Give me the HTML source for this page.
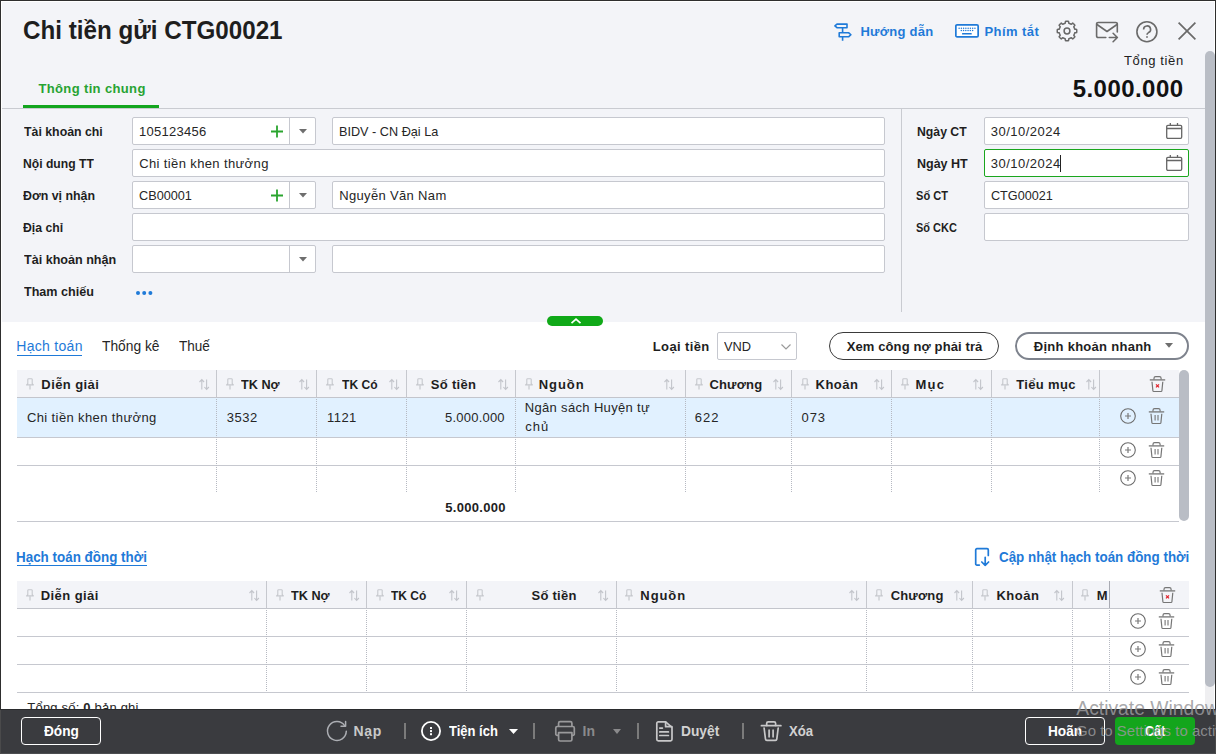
<!DOCTYPE html>
<html><head><meta charset="utf-8">
<style>
*{box-sizing:border-box}
html,body{margin:0;padding:0}
body{width:1216px;height:754px;overflow:hidden;position:relative;background:#f3f4f8;font-family:"Liberation Sans",sans-serif;color:#212121}
.a{position:absolute}
.t{position:absolute;white-space:nowrap}
.in{position:absolute;background:#fff;border:1px solid #c6c8cf;border-radius:2px}
.hl{position:absolute;height:1px;background:#c6c8cf}
.dv{position:absolute;width:1px;background-image:linear-gradient(transparent 50%,#b6b9c2 50%);background-size:1px 2px}
.hs{position:absolute;width:1px;background:#c6c8ce}
svg{position:absolute;overflow:visible}
</style></head><body>
<!-- frame -->
<div class=a style="left:0;top:0;width:1216px;height:1px;background:#2e2e2e"></div>
<div class=a style="left:0;top:0;width:1px;height:754px;background:#2e2e2e"></div>
<div class=a style="left:1215px;top:0;width:1px;height:754px;background:#2e2e2e"></div>
<div class=a style="left:1px;top:1px;width:1214px;height:1px;background:#fff"></div>
<div class=a style="left:1px;top:1px;width:1px;height:708px;background:#fff"></div>
<div class=a style="left:1214px;top:1px;width:1px;height:708px;background:#fff"></div>

<!-- header separator + tab underline -->
<div class=a style="left:2px;top:108px;width:1203px;height:1px;background:#c9cbd1"></div>
<div class=a style="left:23px;top:105px;width:136px;height:3px;background:#13a51f"></div>
<div class=a style="left:901px;top:109px;width:1px;height:203px;background:#c9cbd1"></div>

<!-- header icons -->
<!-- signpost -->
<svg style="left:834px;top:23px" width="18" height="18" viewBox="0 0 18 18" fill="none" stroke="#1f7ad8" stroke-width="1.6" stroke-linejoin="round">
<path d="M3 1.1h10v3.6H3L0.9 2.9z"/><path d="M8.6 4.7v5.1M8.6 13.7v4.1"/><path d="M5.2 9.8h9.6l2.1 1.95-2.1 1.95H5.2z"/></svg>
<!-- keyboard -->
<svg style="left:955px;top:24px" width="24" height="14" viewBox="0 0 24 14">
<rect x="0.85" y="0.85" width="22.3" height="12" rx="1.2" fill="#fff" stroke="#1f7ad8" stroke-width="1.7"/>
<g fill="#1f7ad8"><circle cx="4.10" cy="4.3" r="0.75"/><circle cx="6.36" cy="4.3" r="0.75"/><circle cx="8.62" cy="4.3" r="0.75"/><circle cx="10.88" cy="4.3" r="0.75"/><circle cx="13.14" cy="4.3" r="0.75"/><circle cx="15.40" cy="4.3" r="0.75"/><circle cx="17.66" cy="4.3" r="0.75"/><circle cx="19.92" cy="4.3" r="0.75"/><circle cx="6.30" cy="6.6" r="0.75"/><circle cx="8.56" cy="6.6" r="0.75"/><circle cx="10.82" cy="6.6" r="0.75"/><circle cx="13.08" cy="6.6" r="0.75"/><circle cx="15.34" cy="6.6" r="0.75"/><circle cx="17.60" cy="6.6" r="0.75"/><rect x="7" y="9" width="9.8" height="1.6" rx=".6"/></g></svg>
<!-- gear -->
<svg style="left:1056px;top:20px" width="22" height="22" viewBox="0 0 22 22" fill="none" stroke="#676767" stroke-width="1.5" stroke-linejoin="round">
<path d="M20.75 11.00 L20.75 11.26 L20.74 11.51 L20.72 11.76 L20.70 12.02 L20.67 12.27 L20.62 12.52 L19.87 12.64 L19.10 12.72 L18.68 12.84 L18.63 13.04 L18.57 13.24 L18.51 13.44 L18.45 13.64 L18.38 13.83 L18.30 14.02 L18.22 14.21 L18.13 14.40 L18.04 14.59 L17.94 14.77 L17.84 14.95 L17.74 15.13 L17.95 15.51 L18.43 16.11 L18.88 16.72 L18.74 16.94 L18.58 17.14 L18.41 17.33 L18.25 17.52 L18.07 17.71 L17.89 17.89 L17.71 18.07 L17.52 18.25 L17.33 18.41 L17.14 18.58 L16.94 18.74 L16.72 18.88 L16.11 18.43 L15.51 17.95 L15.13 17.74 L14.95 17.84 L14.77 17.94 L14.59 18.04 L14.40 18.13 L14.21 18.22 L14.02 18.30 L13.83 18.38 L13.64 18.45 L13.44 18.51 L13.24 18.57 L13.04 18.63 L12.84 18.68 L12.72 19.10 L12.64 19.87 L12.52 20.62 L12.27 20.67 L12.02 20.70 L11.76 20.72 L11.51 20.74 L11.26 20.75 L11.00 20.75 L10.74 20.75 L10.49 20.74 L10.24 20.72 L9.98 20.70 L9.73 20.67 L9.48 20.62 L9.36 19.87 L9.28 19.10 L9.16 18.68 L8.96 18.63 L8.76 18.57 L8.56 18.51 L8.36 18.45 L8.17 18.38 L7.98 18.30 L7.79 18.22 L7.60 18.13 L7.41 18.04 L7.23 17.94 L7.05 17.84 L6.87 17.74 L6.49 17.95 L5.89 18.43 L5.28 18.88 L5.06 18.74 L4.86 18.58 L4.67 18.41 L4.48 18.25 L4.29 18.07 L4.11 17.89 L3.93 17.71 L3.75 17.52 L3.59 17.33 L3.42 17.14 L3.26 16.94 L3.12 16.72 L3.57 16.11 L4.05 15.51 L4.26 15.13 L4.16 14.95 L4.06 14.77 L3.96 14.59 L3.87 14.40 L3.78 14.21 L3.70 14.02 L3.62 13.83 L3.55 13.64 L3.49 13.44 L3.43 13.24 L3.37 13.04 L3.32 12.84 L2.90 12.72 L2.13 12.64 L1.38 12.52 L1.33 12.27 L1.30 12.02 L1.28 11.76 L1.26 11.51 L1.25 11.26 L1.25 11.00 L1.25 10.74 L1.26 10.49 L1.28 10.24 L1.30 9.98 L1.33 9.73 L1.38 9.48 L2.13 9.36 L2.90 9.28 L3.32 9.16 L3.37 8.96 L3.43 8.76 L3.49 8.56 L3.55 8.36 L3.62 8.17 L3.70 7.98 L3.78 7.79 L3.87 7.60 L3.96 7.41 L4.06 7.23 L4.16 7.05 L4.26 6.87 L4.05 6.49 L3.57 5.89 L3.12 5.28 L3.26 5.06 L3.42 4.86 L3.59 4.67 L3.75 4.48 L3.93 4.29 L4.11 4.11 L4.29 3.93 L4.48 3.75 L4.67 3.59 L4.86 3.42 L5.06 3.26 L5.28 3.12 L5.89 3.57 L6.49 4.05 L6.87 4.26 L7.05 4.16 L7.23 4.06 L7.41 3.96 L7.60 3.87 L7.79 3.78 L7.98 3.70 L8.17 3.62 L8.36 3.55 L8.56 3.49 L8.76 3.43 L8.96 3.37 L9.16 3.32 L9.28 2.90 L9.36 2.13 L9.48 1.38 L9.73 1.33 L9.98 1.30 L10.24 1.28 L10.49 1.26 L10.74 1.25 L11.00 1.25 L11.26 1.25 L11.51 1.26 L11.76 1.28 L12.02 1.30 L12.27 1.33 L12.52 1.38 L12.64 2.13 L12.72 2.90 L12.84 3.32 L13.04 3.37 L13.24 3.43 L13.44 3.49 L13.64 3.55 L13.83 3.62 L14.02 3.70 L14.21 3.78 L14.40 3.87 L14.59 3.96 L14.77 4.06 L14.95 4.16 L15.13 4.26 L15.51 4.05 L16.11 3.57 L16.72 3.12 L16.94 3.26 L17.14 3.42 L17.33 3.59 L17.52 3.75 L17.71 3.93 L17.89 4.11 L18.07 4.29 L18.25 4.48 L18.41 4.67 L18.58 4.86 L18.74 5.06 L18.88 5.28 L18.43 5.89 L17.95 6.49 L17.74 6.87 L17.84 7.05 L17.94 7.23 L18.04 7.41 L18.13 7.60 L18.22 7.79 L18.30 7.98 L18.38 8.17 L18.45 8.36 L18.51 8.56 L18.57 8.76 L18.63 8.96 L18.68 9.16 L19.10 9.28 L19.87 9.36 L20.62 9.48 L20.67 9.73 L20.70 9.98 L20.72 10.24 L20.74 10.49 L20.75 10.74Z"/><circle cx="11" cy="11" r="2.9"/></svg>
<!-- mail -->
<svg style="left:1096px;top:22px" width="23" height="21" viewBox="0 0 23 21" fill="none" stroke="#6a6a6a" stroke-width="1.6" stroke-linejoin="round" stroke-linecap="round"><path d="M9.8 15.5H2.1A1.5 1.5 0 0 1 0.6 14V2A1.5 1.5 0 0 1 2.1 0.5h17.7A1.5 1.5 0 0 1 21.3 2v7.9"/><path d="M1 2.5l10 7 10-7"/><path d="M13.3 15.5h8.1M17.1 11.3l4.3 4.2-4.3 4.2"/></svg>
<!-- help -->
<svg style="left:1136px;top:21px" width="22" height="22" viewBox="0 0 22 22" fill="none" stroke="#6a6a6a" stroke-width="1.6">
<circle cx="10.9" cy="10.7" r="10"/><path d="M7.6 8.4A3.5 3.5 0 1 1 12.5 11.6C11.5 12.1 11 12.7 11 13.8"/><rect x="10.2" y="15.2" width="1.6" height="1.6" fill="#6a6a6a" stroke="none"/></svg>
<!-- close -->
<svg style="left:1178px;top:22px" width="18" height="18" viewBox="0 0 18 18" stroke="#6a6a6a" stroke-width="1.7"><path d="M0.6 0.6l16.8 16.8M17.4 0.6L0.6 17.4"/></svg>

<!-- page scrollbar -->
<div class=a style="left:1205px;top:660px;width:9px;height:49px;background:#efeff1"></div>
<div class=a style="z-index:3;left:1205px;top:51px;width:10px;height:635.5px;background:#b9bdc5;border-radius:5px"></div>

<!-- ======= form inputs ======= -->
<div class=in style="left:132px;top:117px;width:184px;height:28px"></div>
<div class=a style="left:289px;top:118px;width:1px;height:26px;background:#c6c8cf"></div>
<div class=in style="left:332px;top:117px;width:553px;height:28px"></div>
<div class=in style="left:132px;top:149px;width:753px;height:28px"></div>
<div class=in style="left:132px;top:181px;width:184px;height:28px"></div>
<div class=a style="left:289px;top:182px;width:1px;height:26px;background:#c6c8cf"></div>
<div class=in style="left:332px;top:181px;width:553px;height:28px"></div>
<div class=in style="left:132px;top:213px;width:753px;height:28px"></div>
<div class=in style="left:132px;top:245px;width:184px;height:28px"></div>
<div class=a style="left:289px;top:246px;width:1px;height:26px;background:#c6c8cf"></div>
<div class=in style="left:332px;top:245px;width:553px;height:28px"></div>
<!-- plus + triangles -->
<svg style="left:271px;top:125px" width="12" height="13" viewBox="0 0 12 13" stroke="#2aa52f" stroke-width="1.8"><path d="M6 0.5v12M0 6.5h12"/></svg>
<svg style="left:271px;top:189px" width="12" height="13" viewBox="0 0 12 13" stroke="#2aa52f" stroke-width="1.8"><path d="M6 0.5v12M0 6.5h12"/></svg>
<svg style="left:299px;top:129px" width="8" height="5" viewBox="0 0 8 5"><path d="M0 0h8L4 4.6z" fill="#6e6e6e"/></svg>
<svg style="left:299px;top:193px" width="8" height="5" viewBox="0 0 8 5"><path d="M0 0h8L4 4.6z" fill="#6e6e6e"/></svg>
<svg style="left:299px;top:257px" width="8" height="5" viewBox="0 0 8 5"><path d="M0 0h8L4 4.6z" fill="#6e6e6e"/></svg>
<!-- dots -->
<svg style="left:136px;top:290px" width="17" height="6" viewBox="0 0 17 6" fill="#1f7ad8"><circle cx="2" cy="3" r="2"/><circle cx="8.2" cy="3" r="2"/><circle cx="14.4" cy="3" r="2"/></svg>

<!-- right column inputs -->
<div class=in style="left:984px;top:117px;width:205px;height:28px"></div>
<div class=in style="left:984px;top:149px;width:205px;height:28px;border:1.5px solid #1aa61e"></div>
<div class=in style="left:984px;top:181px;width:205px;height:28px"></div>
<div class=in style="left:984px;top:213px;width:205px;height:28px"></div>
<svg style="left:1166px;top:123px" width="16" height="16" viewBox="0 0 16 16" fill="none" stroke="#666" stroke-width="1.3"><rect x="0.7" y="2.3" width="15" height="13" rx="1.2"/><path d="M0.7 5.5h15M4.3 0v2.3M11.5 0v2.3"/></svg>
<svg style="left:1166px;top:155px" width="16" height="16" viewBox="0 0 16 16" fill="none" stroke="#666" stroke-width="1.3"><rect x="0.7" y="2.3" width="15" height="13" rx="1.2"/><path d="M0.7 5.5h15M4.3 0v2.3M11.5 0v2.3"/></svg>
<div class=a style="left:1060px;top:155px;width:1px;height:17px;background:#222"></div>

<!-- ======= lower white area ======= -->
<div class=a style="left:2px;top:322px;width:1203px;height:387px;background:#fff"></div>
<!-- collapse pill -->
<div class=a style="left:547px;top:316px;width:56px;height:10px;background:#10a918;border-radius:5px"></div>
<svg style="left:571px;top:318px" width="10" height="6" viewBox="0 0 10 6" fill="none" stroke="#fff" stroke-width="1.7"><path d="M0.5 5.2l4.5-4 4.5 4"/></svg>

<!-- tabs underline -->
<div class=a style="left:17px;top:355px;width:65px;height:1.2px;background:#1f7ad8"></div>
<!-- select VND -->
<div class=in style="left:717px;top:332px;width:80px;height:28px;border-color:#c6c8cf"></div>
<svg style="left:781px;top:344px" width="10" height="6" viewBox="0 0 10 6" fill="none" stroke="#9a9a9a" stroke-width="1.2"><path d="M0.5 0.5l4.5 4.5 4.5-4.5"/></svg>
<!-- buttons -->
<div class=a style="left:829px;top:332px;width:170px;height:28px;border:1px solid #3a3a3a;border-radius:14px;background:#fff"></div>
<div class=a style="left:1015px;top:332px;width:174px;height:28px;border:2px solid #7e838d;border-radius:14px;background:#fff"></div>
<svg style="left:1165px;top:343px" width="8" height="5" viewBox="0 0 8 5"><path d="M0 0h8L4 4.8z" fill="#6e6e6e"/></svg>

<!-- ======= table 1 ======= -->
<div class=a style="left:17px;top:370px;width:1162px;height:27px;background:#f3f4f8"></div>
<div class=hl style="left:17px;top:397px;width:1162px;background:#c3c5cc"></div>
<div class=a style="left:17px;top:398px;width:1162px;height:39px;background:#e1f1ff"></div>
<div class=hl style="left:17px;top:437px;width:1162px"></div>
<div class=hl style="left:17px;top:465px;width:1162px"></div>
<div class=hl style="left:17px;top:521px;width:1162px"></div>
<div class=a style="left:1179px;top:370px;width:10px;height:151px;background:#b9bdc5;border-radius:5px"></div>
<!-- header separators -->
<div class=hs style="left:216px;top:370px;height:27px"></div>
<div class=hs style="left:316px;top:370px;height:27px"></div>
<div class=hs style="left:406px;top:370px;height:27px"></div>
<div class=hs style="left:515px;top:370px;height:27px"></div>
<div class=hs style="left:685px;top:370px;height:27px"></div>
<div class=hs style="left:791px;top:370px;height:27px"></div>
<div class=hs style="left:891px;top:370px;height:27px"></div>
<div class=hs style="left:991px;top:370px;height:27px"></div>
<div class=hs style="left:1099px;top:370px;height:27px"></div>
<!-- dotted -->
<div class=dv style="left:216px;top:398px;height:95px"></div>
<div class=dv style="left:316px;top:398px;height:95px"></div>
<div class=dv style="left:406px;top:398px;height:95px"></div>
<div class=dv style="left:515px;top:398px;height:95px"></div>
<div class=dv style="left:685px;top:398px;height:95px"></div>
<div class=dv style="left:791px;top:398px;height:95px"></div>
<div class=dv style="left:891px;top:398px;height:95px"></div>
<div class=dv style="left:991px;top:398px;height:95px"></div>
<div class=dv style="left:1099px;top:398px;height:95px"></div>
<svg style="left:25.5px;top:378px" width="8" height="12" viewBox="0 0 8 12" fill="none" stroke="#c6c8cd" stroke-width="1.1" stroke-linejoin="round"><path d="M2.6 0.7h2.8a.8.8 0 0 1 .8.8v4.2l1.2 1.2H0.6l1.2-1.2V1.5a.8.8 0 0 1 .8-.8z"/><path d="M4 7.2v4.3" stroke-width="1.2"/></svg>
<svg style="left:199px;top:379px" width="11" height="11" viewBox="0 0 11 11" fill="none" stroke="#c3c5cb" stroke-width="1.1"><path d="M2.8 0.6v10M0.5 3l2.3-2.4L5.1 3"/><path d="M7.6 0.4v10M5.4 8l2.2 2.4L9.9 8"/></svg>
<svg style="left:225.5px;top:378px" width="8" height="12" viewBox="0 0 8 12" fill="none" stroke="#c6c8cd" stroke-width="1.1" stroke-linejoin="round"><path d="M2.6 0.7h2.8a.8.8 0 0 1 .8.8v4.2l1.2 1.2H0.6l1.2-1.2V1.5a.8.8 0 0 1 .8-.8z"/><path d="M4 7.2v4.3" stroke-width="1.2"/></svg>
<svg style="left:299px;top:379px" width="11" height="11" viewBox="0 0 11 11" fill="none" stroke="#c3c5cb" stroke-width="1.1"><path d="M2.8 0.6v10M0.5 3l2.3-2.4L5.1 3"/><path d="M7.6 0.4v10M5.4 8l2.2 2.4L9.9 8"/></svg>
<svg style="left:325.5px;top:378px" width="8" height="12" viewBox="0 0 8 12" fill="none" stroke="#c6c8cd" stroke-width="1.1" stroke-linejoin="round"><path d="M2.6 0.7h2.8a.8.8 0 0 1 .8.8v4.2l1.2 1.2H0.6l1.2-1.2V1.5a.8.8 0 0 1 .8-.8z"/><path d="M4 7.2v4.3" stroke-width="1.2"/></svg>
<svg style="left:389px;top:379px" width="11" height="11" viewBox="0 0 11 11" fill="none" stroke="#c3c5cb" stroke-width="1.1"><path d="M2.8 0.6v10M0.5 3l2.3-2.4L5.1 3"/><path d="M7.6 0.4v10M5.4 8l2.2 2.4L9.9 8"/></svg>
<svg style="left:415.5px;top:378px" width="8" height="12" viewBox="0 0 8 12" fill="none" stroke="#c6c8cd" stroke-width="1.1" stroke-linejoin="round"><path d="M2.6 0.7h2.8a.8.8 0 0 1 .8.8v4.2l1.2 1.2H0.6l1.2-1.2V1.5a.8.8 0 0 1 .8-.8z"/><path d="M4 7.2v4.3" stroke-width="1.2"/></svg>
<svg style="left:498px;top:379px" width="11" height="11" viewBox="0 0 11 11" fill="none" stroke="#c3c5cb" stroke-width="1.1"><path d="M2.8 0.6v10M0.5 3l2.3-2.4L5.1 3"/><path d="M7.6 0.4v10M5.4 8l2.2 2.4L9.9 8"/></svg>
<svg style="left:524.5px;top:378px" width="8" height="12" viewBox="0 0 8 12" fill="none" stroke="#c6c8cd" stroke-width="1.1" stroke-linejoin="round"><path d="M2.6 0.7h2.8a.8.8 0 0 1 .8.8v4.2l1.2 1.2H0.6l1.2-1.2V1.5a.8.8 0 0 1 .8-.8z"/><path d="M4 7.2v4.3" stroke-width="1.2"/></svg>
<svg style="left:664px;top:379px" width="11" height="11" viewBox="0 0 11 11" fill="none" stroke="#c3c5cb" stroke-width="1.1"><path d="M2.8 0.6v10M0.5 3l2.3-2.4L5.1 3"/><path d="M7.6 0.4v10M5.4 8l2.2 2.4L9.9 8"/></svg>
<svg style="left:694.5px;top:378px" width="8" height="12" viewBox="0 0 8 12" fill="none" stroke="#c6c8cd" stroke-width="1.1" stroke-linejoin="round"><path d="M2.6 0.7h2.8a.8.8 0 0 1 .8.8v4.2l1.2 1.2H0.6l1.2-1.2V1.5a.8.8 0 0 1 .8-.8z"/><path d="M4 7.2v4.3" stroke-width="1.2"/></svg>
<svg style="left:773px;top:379px" width="11" height="11" viewBox="0 0 11 11" fill="none" stroke="#c3c5cb" stroke-width="1.1"><path d="M2.8 0.6v10M0.5 3l2.3-2.4L5.1 3"/><path d="M7.6 0.4v10M5.4 8l2.2 2.4L9.9 8"/></svg>
<svg style="left:800.5px;top:378px" width="8" height="12" viewBox="0 0 8 12" fill="none" stroke="#c6c8cd" stroke-width="1.1" stroke-linejoin="round"><path d="M2.6 0.7h2.8a.8.8 0 0 1 .8.8v4.2l1.2 1.2H0.6l1.2-1.2V1.5a.8.8 0 0 1 .8-.8z"/><path d="M4 7.2v4.3" stroke-width="1.2"/></svg>
<svg style="left:874px;top:379px" width="11" height="11" viewBox="0 0 11 11" fill="none" stroke="#c3c5cb" stroke-width="1.1"><path d="M2.8 0.6v10M0.5 3l2.3-2.4L5.1 3"/><path d="M7.6 0.4v10M5.4 8l2.2 2.4L9.9 8"/></svg>
<svg style="left:900.5px;top:378px" width="8" height="12" viewBox="0 0 8 12" fill="none" stroke="#c6c8cd" stroke-width="1.1" stroke-linejoin="round"><path d="M2.6 0.7h2.8a.8.8 0 0 1 .8.8v4.2l1.2 1.2H0.6l1.2-1.2V1.5a.8.8 0 0 1 .8-.8z"/><path d="M4 7.2v4.3" stroke-width="1.2"/></svg>
<svg style="left:973px;top:379px" width="11" height="11" viewBox="0 0 11 11" fill="none" stroke="#c3c5cb" stroke-width="1.1"><path d="M2.8 0.6v10M0.5 3l2.3-2.4L5.1 3"/><path d="M7.6 0.4v10M5.4 8l2.2 2.4L9.9 8"/></svg>
<svg style="left:1000.5px;top:378px" width="8" height="12" viewBox="0 0 8 12" fill="none" stroke="#c6c8cd" stroke-width="1.1" stroke-linejoin="round"><path d="M2.6 0.7h2.8a.8.8 0 0 1 .8.8v4.2l1.2 1.2H0.6l1.2-1.2V1.5a.8.8 0 0 1 .8-.8z"/><path d="M4 7.2v4.3" stroke-width="1.2"/></svg>
<svg style="left:1086px;top:379px" width="11" height="11" viewBox="0 0 11 11" fill="none" stroke="#c3c5cb" stroke-width="1.1"><path d="M2.8 0.6v10M0.5 3l2.3-2.4L5.1 3"/><path d="M7.6 0.4v10M5.4 8l2.2 2.4L9.9 8"/></svg>
<svg style="left:1149.5px;top:376px" width="15" height="16" viewBox="0 0 15 16" fill="none" stroke="#767676" stroke-width="1.2" stroke-linejoin="round"><path d="M-0.2 3.9h15.4" stroke-width="1.3"/><path d="M4 3.6V2.3a1.6 1.6 0 0 1 1.6-1.6h3.9a1.6 1.6 0 0 1 1.6 1.6v1.3"/><path d="M2 5.8l.9 8.9a.9.9 0 0 0 .9.8h7.2a.9.9 0 0 0 .9-.8l.9-8.9"/><path d="M6 8.4l3 3M9 8.4l-3 3" stroke="#e0242c" stroke-width="1.3"/></svg>
<svg style="left:1120px;top:408px" width="16" height="16" viewBox="0 0 16 16" fill="none" stroke="#6b6b6b" stroke-width="1.1"><circle cx="8" cy="8" r="7.3"/><path d="M8 5v6M5 8h6" stroke-width="1.2" stroke="#7a7a7a"/></svg>
<svg style="left:1148.5px;top:408px" width="15" height="16" viewBox="0 0 15 16" fill="none" stroke="#767676" stroke-width="1.2" stroke-linejoin="round"><path d="M-0.2 3.9h15.4" stroke-width="1.3"/><path d="M4 3.6V2.3a1.6 1.6 0 0 1 1.6-1.6h3.9a1.6 1.6 0 0 1 1.6 1.6v1.3"/><path d="M2 5.8l.9 8.9a.9.9 0 0 0 .9.8h7.2a.9.9 0 0 0 .9-.8l.9-8.9"/><path d="M6.1 7v5.4M9 7v5.4" stroke-width="1.1"/></svg>
<svg style="left:1120px;top:442px" width="16" height="16" viewBox="0 0 16 16" fill="none" stroke="#6b6b6b" stroke-width="1.1"><circle cx="8" cy="8" r="7.3"/><path d="M8 5v6M5 8h6" stroke-width="1.2" stroke="#7a7a7a"/></svg>
<svg style="left:1148.5px;top:442px" width="15" height="16" viewBox="0 0 15 16" fill="none" stroke="#767676" stroke-width="1.2" stroke-linejoin="round"><path d="M-0.2 3.9h15.4" stroke-width="1.3"/><path d="M4 3.6V2.3a1.6 1.6 0 0 1 1.6-1.6h3.9a1.6 1.6 0 0 1 1.6 1.6v1.3"/><path d="M2 5.8l.9 8.9a.9.9 0 0 0 .9.8h7.2a.9.9 0 0 0 .9-.8l.9-8.9"/><path d="M6.1 7v5.4M9 7v5.4" stroke-width="1.1"/></svg>
<svg style="left:1120px;top:470px" width="16" height="16" viewBox="0 0 16 16" fill="none" stroke="#6b6b6b" stroke-width="1.1"><circle cx="8" cy="8" r="7.3"/><path d="M8 5v6M5 8h6" stroke-width="1.2" stroke="#7a7a7a"/></svg>
<svg style="left:1148.5px;top:470px" width="15" height="16" viewBox="0 0 15 16" fill="none" stroke="#767676" stroke-width="1.2" stroke-linejoin="round"><path d="M-0.2 3.9h15.4" stroke-width="1.3"/><path d="M4 3.6V2.3a1.6 1.6 0 0 1 1.6-1.6h3.9a1.6 1.6 0 0 1 1.6 1.6v1.3"/><path d="M2 5.8l.9 8.9a.9.9 0 0 0 .9.8h7.2a.9.9 0 0 0 .9-.8l.9-8.9"/><path d="M6.1 7v5.4M9 7v5.4" stroke-width="1.1"/></svg>

<!-- ======= table 2 ======= -->
<div class=a style="left:17px;top:565.2px;width:130px;height:1.2px;background:#1f7ad8"></div>
<svg style="left:975px;top:548px" width="16" height="19" viewBox="0 0 16 19" fill="none" stroke="#1f7ad8" stroke-width="1.7" stroke-linejoin="round" stroke-linecap="round"><path d="M4.3 17.1H1.9a1.2 1.2 0 0 1-1.2-1.2V1.9A1.2 1.2 0 0 1 1.9 0.7h10.2a1.2 1.2 0 0 1 1.2 1.2v5.6"/><path d="M10.2 9.3v8M6.8 14l3.4 3.4 3.4-3.4"/></svg>
<div class=a style="left:17px;top:581px;width:1172px;height:27px;background:#f3f4f8"></div>
<div class=hl style="left:17px;top:608px;width:1172px;background:#c3c5cc"></div>
<div class=hl style="left:17px;top:636px;width:1172px"></div>
<div class=hl style="left:17px;top:664px;width:1172px"></div>
<div class=hl style="left:17px;top:692px;width:1172px"></div>
<div class=hs style="left:266px;top:581px;height:27px"></div>
<div class=hs style="left:366px;top:581px;height:27px"></div>
<div class=hs style="left:466px;top:581px;height:27px"></div>
<div class=hs style="left:616px;top:581px;height:27px"></div>
<div class=hs style="left:866px;top:581px;height:27px"></div>
<div class=hs style="left:972px;top:581px;height:27px"></div>
<div class=hs style="left:1072px;top:581px;height:27px"></div>
<div class=hs style="left:1109px;top:581px;height:27px;background:#a9abb3"></div>
<div class=dv style="left:266px;top:609px;height:83px"></div>
<div class=dv style="left:366px;top:609px;height:83px"></div>
<div class=dv style="left:466px;top:609px;height:83px"></div>
<div class=dv style="left:616px;top:609px;height:83px"></div>
<div class=dv style="left:866px;top:609px;height:83px"></div>
<div class=dv style="left:972px;top:609px;height:83px"></div>
<div class=dv style="left:1072px;top:609px;height:83px"></div>
<div class=dv style="left:1109px;top:609px;height:83px"></div>
<svg style="left:25.5px;top:589px" width="8" height="12" viewBox="0 0 8 12" fill="none" stroke="#c6c8cd" stroke-width="1.1" stroke-linejoin="round"><path d="M2.6 0.7h2.8a.8.8 0 0 1 .8.8v4.2l1.2 1.2H0.6l1.2-1.2V1.5a.8.8 0 0 1 .8-.8z"/><path d="M4 7.2v4.3" stroke-width="1.2"/></svg>
<svg style="left:249px;top:590px" width="11" height="11" viewBox="0 0 11 11" fill="none" stroke="#c3c5cb" stroke-width="1.1"><path d="M2.8 0.6v10M0.5 3l2.3-2.4L5.1 3"/><path d="M7.6 0.4v10M5.4 8l2.2 2.4L9.9 8"/></svg>
<svg style="left:275.5px;top:589px" width="8" height="12" viewBox="0 0 8 12" fill="none" stroke="#c6c8cd" stroke-width="1.1" stroke-linejoin="round"><path d="M2.6 0.7h2.8a.8.8 0 0 1 .8.8v4.2l1.2 1.2H0.6l1.2-1.2V1.5a.8.8 0 0 1 .8-.8z"/><path d="M4 7.2v4.3" stroke-width="1.2"/></svg>
<svg style="left:349px;top:590px" width="11" height="11" viewBox="0 0 11 11" fill="none" stroke="#c3c5cb" stroke-width="1.1"><path d="M2.8 0.6v10M0.5 3l2.3-2.4L5.1 3"/><path d="M7.6 0.4v10M5.4 8l2.2 2.4L9.9 8"/></svg>
<svg style="left:375.5px;top:589px" width="8" height="12" viewBox="0 0 8 12" fill="none" stroke="#c6c8cd" stroke-width="1.1" stroke-linejoin="round"><path d="M2.6 0.7h2.8a.8.8 0 0 1 .8.8v4.2l1.2 1.2H0.6l1.2-1.2V1.5a.8.8 0 0 1 .8-.8z"/><path d="M4 7.2v4.3" stroke-width="1.2"/></svg>
<svg style="left:449px;top:590px" width="11" height="11" viewBox="0 0 11 11" fill="none" stroke="#c3c5cb" stroke-width="1.1"><path d="M2.8 0.6v10M0.5 3l2.3-2.4L5.1 3"/><path d="M7.6 0.4v10M5.4 8l2.2 2.4L9.9 8"/></svg>
<svg style="left:475.5px;top:589px" width="8" height="12" viewBox="0 0 8 12" fill="none" stroke="#c6c8cd" stroke-width="1.1" stroke-linejoin="round"><path d="M2.6 0.7h2.8a.8.8 0 0 1 .8.8v4.2l1.2 1.2H0.6l1.2-1.2V1.5a.8.8 0 0 1 .8-.8z"/><path d="M4 7.2v4.3" stroke-width="1.2"/></svg>
<svg style="left:598px;top:590px" width="11" height="11" viewBox="0 0 11 11" fill="none" stroke="#c3c5cb" stroke-width="1.1"><path d="M2.8 0.6v10M0.5 3l2.3-2.4L5.1 3"/><path d="M7.6 0.4v10M5.4 8l2.2 2.4L9.9 8"/></svg>
<svg style="left:624.5px;top:589px" width="8" height="12" viewBox="0 0 8 12" fill="none" stroke="#c6c8cd" stroke-width="1.1" stroke-linejoin="round"><path d="M2.6 0.7h2.8a.8.8 0 0 1 .8.8v4.2l1.2 1.2H0.6l1.2-1.2V1.5a.8.8 0 0 1 .8-.8z"/><path d="M4 7.2v4.3" stroke-width="1.2"/></svg>
<svg style="left:849px;top:590px" width="11" height="11" viewBox="0 0 11 11" fill="none" stroke="#c3c5cb" stroke-width="1.1"><path d="M2.8 0.6v10M0.5 3l2.3-2.4L5.1 3"/><path d="M7.6 0.4v10M5.4 8l2.2 2.4L9.9 8"/></svg>
<svg style="left:874.5px;top:589px" width="8" height="12" viewBox="0 0 8 12" fill="none" stroke="#c6c8cd" stroke-width="1.1" stroke-linejoin="round"><path d="M2.6 0.7h2.8a.8.8 0 0 1 .8.8v4.2l1.2 1.2H0.6l1.2-1.2V1.5a.8.8 0 0 1 .8-.8z"/><path d="M4 7.2v4.3" stroke-width="1.2"/></svg>
<svg style="left:954px;top:590px" width="11" height="11" viewBox="0 0 11 11" fill="none" stroke="#c3c5cb" stroke-width="1.1"><path d="M2.8 0.6v10M0.5 3l2.3-2.4L5.1 3"/><path d="M7.6 0.4v10M5.4 8l2.2 2.4L9.9 8"/></svg>
<svg style="left:980.5px;top:589px" width="8" height="12" viewBox="0 0 8 12" fill="none" stroke="#c6c8cd" stroke-width="1.1" stroke-linejoin="round"><path d="M2.6 0.7h2.8a.8.8 0 0 1 .8.8v4.2l1.2 1.2H0.6l1.2-1.2V1.5a.8.8 0 0 1 .8-.8z"/><path d="M4 7.2v4.3" stroke-width="1.2"/></svg>
<svg style="left:1054px;top:590px" width="11" height="11" viewBox="0 0 11 11" fill="none" stroke="#c3c5cb" stroke-width="1.1"><path d="M2.8 0.6v10M0.5 3l2.3-2.4L5.1 3"/><path d="M7.6 0.4v10M5.4 8l2.2 2.4L9.9 8"/></svg>
<svg style="left:1080.5px;top:589px" width="8" height="12" viewBox="0 0 8 12" fill="none" stroke="#c6c8cd" stroke-width="1.1" stroke-linejoin="round"><path d="M2.6 0.7h2.8a.8.8 0 0 1 .8.8v4.2l1.2 1.2H0.6l1.2-1.2V1.5a.8.8 0 0 1 .8-.8z"/><path d="M4 7.2v4.3" stroke-width="1.2"/></svg>
<svg style="left:1159.5px;top:587px" width="15" height="16" viewBox="0 0 15 16" fill="none" stroke="#767676" stroke-width="1.2" stroke-linejoin="round"><path d="M-0.2 3.9h15.4" stroke-width="1.3"/><path d="M4 3.6V2.3a1.6 1.6 0 0 1 1.6-1.6h3.9a1.6 1.6 0 0 1 1.6 1.6v1.3"/><path d="M2 5.8l.9 8.9a.9.9 0 0 0 .9.8h7.2a.9.9 0 0 0 .9-.8l.9-8.9"/><path d="M6 8.4l3 3M9 8.4l-3 3" stroke="#e0242c" stroke-width="1.3"/></svg>
<svg style="left:1130px;top:612.5px" width="16" height="16" viewBox="0 0 16 16" fill="none" stroke="#6b6b6b" stroke-width="1.1"><circle cx="8" cy="8" r="7.3"/><path d="M8 5v6M5 8h6" stroke-width="1.2" stroke="#7a7a7a"/></svg>
<svg style="left:1158.5px;top:612.5px" width="15" height="16" viewBox="0 0 15 16" fill="none" stroke="#767676" stroke-width="1.2" stroke-linejoin="round"><path d="M-0.2 3.9h15.4" stroke-width="1.3"/><path d="M4 3.6V2.3a1.6 1.6 0 0 1 1.6-1.6h3.9a1.6 1.6 0 0 1 1.6 1.6v1.3"/><path d="M2 5.8l.9 8.9a.9.9 0 0 0 .9.8h7.2a.9.9 0 0 0 .9-.8l.9-8.9"/><path d="M6.1 7v5.4M9 7v5.4" stroke-width="1.1"/></svg>
<svg style="left:1130px;top:640.5px" width="16" height="16" viewBox="0 0 16 16" fill="none" stroke="#6b6b6b" stroke-width="1.1"><circle cx="8" cy="8" r="7.3"/><path d="M8 5v6M5 8h6" stroke-width="1.2" stroke="#7a7a7a"/></svg>
<svg style="left:1158.5px;top:640.5px" width="15" height="16" viewBox="0 0 15 16" fill="none" stroke="#767676" stroke-width="1.2" stroke-linejoin="round"><path d="M-0.2 3.9h15.4" stroke-width="1.3"/><path d="M4 3.6V2.3a1.6 1.6 0 0 1 1.6-1.6h3.9a1.6 1.6 0 0 1 1.6 1.6v1.3"/><path d="M2 5.8l.9 8.9a.9.9 0 0 0 .9.8h7.2a.9.9 0 0 0 .9-.8l.9-8.9"/><path d="M6.1 7v5.4M9 7v5.4" stroke-width="1.1"/></svg>
<svg style="left:1130px;top:668.5px" width="16" height="16" viewBox="0 0 16 16" fill="none" stroke="#6b6b6b" stroke-width="1.1"><circle cx="8" cy="8" r="7.3"/><path d="M8 5v6M5 8h6" stroke-width="1.2" stroke="#7a7a7a"/></svg>
<svg style="left:1158.5px;top:668.5px" width="15" height="16" viewBox="0 0 15 16" fill="none" stroke="#767676" stroke-width="1.2" stroke-linejoin="round"><path d="M-0.2 3.9h15.4" stroke-width="1.3"/><path d="M4 3.6V2.3a1.6 1.6 0 0 1 1.6-1.6h3.9a1.6 1.6 0 0 1 1.6 1.6v1.3"/><path d="M2 5.8l.9 8.9a.9.9 0 0 0 .9.8h7.2a.9.9 0 0 0 .9-.8l.9-8.9"/><path d="M6.1 7v5.4M9 7v5.4" stroke-width="1.1"/></svg>

<div class=t id=tx0 style="top:18.44px;font-size:25px;line-height:25px;font-weight:bold;color:#1e1e1e;transform:scaleX(0.9679);transform-origin:left;left:23.06px;">Chi tiền gửi CTG00021</div>
<div class=t id=tx1 style="top:25.20px;font-size:13px;line-height:13px;font-weight:bold;color:#1f7ad8;letter-spacing:0.259px;left:860.46px;">Hướng dẫn</div>
<div class=t id=tx2 style="top:25.20px;font-size:13px;line-height:13px;font-weight:bold;color:#1f7ad8;letter-spacing:0.442px;left:984.46px;">Phím tắt</div>
<div class=t id=tx3 style="top:54.00px;font-size:13px;line-height:13px;font-weight:normal;color:#212121;letter-spacing:0.614px;right:32.23px;">Tổng tiền</div>
<div class=t id=tx4 style="top:77.48px;font-size:24px;line-height:24px;font-weight:bold;color:#111;letter-spacing:0.444px;right:32.53px;">5.000.000</div>
<div class=t id=tx5 style="top:81.50px;font-size:13px;line-height:13px;font-weight:bold;color:#27a332;letter-spacing:0.367px;left:38.43px;">Thông tin chung</div>
<div class=t id=tx6 style="top:124.80px;font-size:13px;line-height:13px;font-weight:bold;color:#1e1e1e;transform:scaleX(0.9484);transform-origin:left;left:23.75px;">Tài khoản chi</div>
<div class=t id=tx7 style="top:156.80px;font-size:13px;line-height:13px;font-weight:bold;color:#1e1e1e;transform:scaleX(0.9338);transform-origin:left;left:22.80px;">Nội dung TT</div>
<div class=t id=tx8 style="top:188.80px;font-size:13px;line-height:13px;font-weight:bold;color:#1e1e1e;transform:scaleX(0.9519);transform-origin:left;left:23.27px;">Đơn vị nhận</div>
<div class=t id=tx9 style="top:220.80px;font-size:13px;line-height:13px;font-weight:bold;color:#1e1e1e;transform:scaleX(0.9416);transform-origin:left;left:23.27px;">Địa chỉ</div>
<div class=t id=tx10 style="top:252.80px;font-size:13px;line-height:13px;font-weight:bold;color:#1e1e1e;transform:scaleX(0.9665);transform-origin:left;left:23.75px;">Tài khoản nhận</div>
<div class=t id=tx11 style="top:284.60px;font-size:13px;line-height:13px;font-weight:bold;color:#1e1e1e;transform:scaleX(0.9674);transform-origin:left;left:23.75px;">Tham chiếu</div>
<div class=t id=tx12 style="top:124.80px;font-size:13px;line-height:13px;font-weight:bold;color:#1e1e1e;transform:scaleX(0.9419);transform-origin:left;left:916.61px;">Ngày CT</div>
<div class=t id=tx13 style="top:156.80px;font-size:13px;line-height:13px;font-weight:bold;color:#1e1e1e;transform:scaleX(0.9615);transform-origin:left;left:916.61px;">Ngày HT</div>
<div class=t id=tx14 style="top:188.80px;font-size:13px;line-height:13px;font-weight:bold;color:#1e1e1e;transform:scaleX(0.8517);transform-origin:left;left:916.47px;">Số CT</div>
<div class=t id=tx15 style="top:220.80px;font-size:13px;line-height:13px;font-weight:bold;color:#1e1e1e;transform:scaleX(0.8437);transform-origin:left;left:916.47px;">Số CKC</div>
<div class=t id=tx16 style="top:125.20px;font-size:13px;line-height:13px;font-weight:normal;color:#262626;letter-spacing:0.286px;left:138.95px;">105123456</div>
<div class=t id=tx17 style="top:125.20px;font-size:13px;line-height:13px;font-weight:normal;color:#262626;transform:scaleX(0.9746);transform-origin:left;left:338.77px;">BIDV - CN Đại La</div>
<div class=t id=tx18 style="top:157.20px;font-size:13px;line-height:13px;font-weight:normal;color:#262626;letter-spacing:0.378px;left:139.17px;">Chi tiền khen thưởng</div>
<div class=t id=tx19 style="top:189.20px;font-size:13px;line-height:13px;font-weight:normal;color:#262626;transform:scaleX(0.9764);transform-origin:left;left:139.16px;">CB00001</div>
<div class=t id=tx20 style="top:189.20px;font-size:13px;line-height:13px;font-weight:normal;color:#262626;letter-spacing:0.343px;left:339.16px;">Nguyễn Văn Nam</div>
<div class=t id=tx21 style="top:125.20px;font-size:13px;line-height:13px;font-weight:normal;color:#262626;letter-spacing:0.509px;left:990.67px;">30/10/2024</div>
<div class=t id=tx22 style="top:157.20px;font-size:13px;line-height:13px;font-weight:normal;color:#262626;letter-spacing:0.509px;left:990.67px;">30/10/2024</div>
<div class=t id=tx23 style="top:189.20px;font-size:13px;line-height:13px;font-weight:normal;color:#262626;transform:scaleX(0.9717);transform-origin:left;left:990.71px;">CTG00021</div>
<div class=t id=tx24 style="top:339.15px;font-size:14px;line-height:14px;font-weight:normal;color:#1f7ad8;letter-spacing:0.291px;left:16.32px;">Hạch toán</div>
<div class=t id=tx25 style="top:339.15px;font-size:14px;line-height:14px;font-weight:normal;color:#262626;transform:scaleX(0.9850);transform-origin:left;left:101.59px;">Thống kê</div>
<div class=t id=tx26 style="top:339.15px;font-size:14px;line-height:14px;font-weight:normal;color:#262626;transform:scaleX(0.9671);transform-origin:left;left:178.59px;">Thuế</div>
<div class=t id=tx27 style="top:339.90px;font-size:13px;line-height:13px;font-weight:bold;color:#1e1e1e;letter-spacing:0.370px;left:652.81px;">Loại tiền</div>
<div class=t id=tx28 style="top:339.90px;font-size:13px;line-height:13px;font-weight:normal;color:#262626;transform:scaleX(0.9874);transform-origin:left;left:724.36px;">VND</div>
<div class=t id=tx29 style="top:339.90px;font-size:13px;line-height:13px;font-weight:bold;color:#1e1e1e;letter-spacing:0.118px;left:846.63px;">Xem công nợ phải trả</div>
<div class=t id=tx30 style="top:339.90px;font-size:13px;line-height:13px;font-weight:bold;color:#1e1e1e;letter-spacing:0.278px;left:1033.75px;">Định khoản nhanh</div>
<div class=t id=tx31 style="top:378.20px;font-size:13px;line-height:13px;font-weight:bold;color:#1e1e1e;letter-spacing:0.417px;left:41.35px;">Diễn giải</div>
<div class=t id=tx32 style="top:378.20px;font-size:13px;line-height:13px;font-weight:bold;color:#1e1e1e;transform:scaleX(0.9764);transform-origin:left;left:241.23px;">TK Nợ</div>
<div class=t id=tx33 style="top:378.20px;font-size:13px;line-height:13px;font-weight:bold;color:#1e1e1e;transform:scaleX(0.9293);transform-origin:left;left:342.20px;">TK Có</div>
<div class=t id=tx34 style="top:378.20px;font-size:13px;line-height:13px;font-weight:bold;color:#1e1e1e;letter-spacing:0.272px;left:430.87px;">Số tiền</div>
<div class=t id=tx35 style="top:378.20px;font-size:13px;line-height:13px;font-weight:bold;color:#1e1e1e;letter-spacing:0.913px;left:538.81px;">Nguồn</div>
<div class=t id=tx36 style="top:378.20px;font-size:13px;line-height:13px;font-weight:bold;color:#1e1e1e;letter-spacing:0.142px;left:709.51px;">Chương</div>
<div class=t id=tx37 style="top:378.20px;font-size:13px;line-height:13px;font-weight:bold;color:#1e1e1e;letter-spacing:0.470px;left:815.54px;">Khoản</div>
<div class=t id=tx38 style="top:378.20px;font-size:13px;line-height:13px;font-weight:bold;color:#1e1e1e;letter-spacing:1.204px;left:915.54px;">Mục</div>
<div class=t id=tx39 style="top:378.20px;font-size:13px;line-height:13px;font-weight:bold;color:#1e1e1e;letter-spacing:0.333px;left:1016.32px;">Tiểu mục</div>
<div class=t id=tx40 style="top:410.80px;font-size:13px;line-height:13px;font-weight:normal;color:#262626;letter-spacing:0.383px;left:26.97px;">Chi tiền khen thưởng</div>
<div class=t id=tx41 style="top:410.80px;font-size:13px;line-height:13px;font-weight:normal;color:#262626;letter-spacing:0.548px;left:226.67px;">3532</div>
<div class=t id=tx42 style="top:410.80px;font-size:13px;line-height:13px;font-weight:normal;color:#262626;letter-spacing:0.436px;left:327.02px;">1121</div>
<div class=t id=tx43 style="top:410.80px;font-size:13px;line-height:13px;font-weight:normal;color:#262626;letter-spacing:0.201px;right:711.24px;">5.000.000</div>
<div class=t id=tx44 style="top:401.40px;font-size:13px;line-height:13px;font-weight:normal;color:#262626;letter-spacing:0.340px;left:524.73px;">Ngân sách Huyện tự</div>
<div class=t id=tx45 style="top:419.80px;font-size:13px;line-height:13px;font-weight:normal;color:#262626;letter-spacing:1.052px;left:525.27px;">chủ</div>
<div class=t id=tx46 style="top:410.80px;font-size:13px;line-height:13px;font-weight:normal;color:#262626;letter-spacing:0.948px;left:694.83px;">622</div>
<div class=t id=tx47 style="top:410.80px;font-size:13px;line-height:13px;font-weight:normal;color:#262626;letter-spacing:0.942px;left:801.51px;">073</div>
<div class=t id=tx48 style="top:500.50px;font-size:13px;line-height:13px;font-weight:bold;color:#1e1e1e;letter-spacing:0.284px;right:710.31px;">5.000.000</div>
<div class=t id=tx49 style="top:550.13px;font-size:14.5px;line-height:14.5px;font-weight:bold;color:#1f7ad8;transform:scaleX(0.9252);transform-origin:left;left:16.48px;">Hạch toán đồng thời</div>
<div class=t id=tx50 style="top:550.43px;font-size:14.5px;line-height:14.5px;font-weight:bold;color:#1f7ad8;transform:scaleX(0.9237);transform-origin:left;left:999.48px;">Cập nhật hạch toán đồng thời</div>
<div class=t id=tx51 style="top:589.20px;font-size:13px;line-height:13px;font-weight:bold;color:#1e1e1e;letter-spacing:0.417px;left:40.79px;">Diễn giải</div>
<div class=t id=tx52 style="top:589.20px;font-size:13px;line-height:13px;font-weight:bold;color:#1e1e1e;transform:scaleX(0.9757);transform-origin:left;left:290.56px;">TK Nợ</div>
<div class=t id=tx53 style="top:589.20px;font-size:13px;line-height:13px;font-weight:bold;color:#1e1e1e;transform:scaleX(0.9226);transform-origin:left;left:391.49px;">TK Có</div>
<div class=t id=tx54 style="top:589.20px;font-size:13px;line-height:13px;font-weight:bold;color:#1e1e1e;letter-spacing:0.260px;left:531.50px;">Số tiền</div>
<div class=t id=tx55 style="top:589.20px;font-size:13px;line-height:13px;font-weight:bold;color:#1e1e1e;letter-spacing:0.907px;left:640.35px;">Nguồn</div>
<div class=t id=tx56 style="top:589.20px;font-size:13px;line-height:13px;font-weight:bold;color:#1e1e1e;letter-spacing:0.153px;left:890.70px;">Chương</div>
<div class=t id=tx57 style="top:589.20px;font-size:13px;line-height:13px;font-weight:bold;color:#1e1e1e;letter-spacing:0.513px;left:996.46px;">Khoản</div>
<div class=t id=tx58 style="top:589.20px;font-size:13px;line-height:13px;font-weight:bold;color:#1e1e1e;letter-spacing:12.576px;left:1096.79px;">M</div>
<div class=t id=tx59 style="top:700.50px;font-size:13px;line-height:13px;font-weight:normal;color:#262626;letter-spacing:0.199px;left:27.32px;">Tổng số: <b>0</b> bản ghi</div>
<div class=t id=tx60 style="top:724.05px;font-size:14px;line-height:14px;font-weight:bold;color:#ffffff;transform:scaleX(0.9746);transform-origin:left;left:43.78px;z-index:6">Đóng</div>
<div class=t id=tx61 style="top:724.05px;font-size:14px;line-height:14px;font-weight:bold;color:#c9c9c9;letter-spacing:0.662px;left:353.54px;z-index:6">Nạp</div>
<div class=t id=tx62 style="top:724.05px;font-size:14px;line-height:14px;font-weight:bold;color:#ffffff;transform:scaleX(0.9285);transform-origin:left;left:448.53px;z-index:6">Tiện ích</div>
<div class=t id=tx63 style="top:724.05px;font-size:14px;line-height:14px;font-weight:bold;color:#8a8a8c;left:582.54px;z-index:6">In</div>
<div class=t id=tx64 style="top:724.05px;font-size:14px;line-height:14px;font-weight:bold;color:#d2d2d2;transform:scaleX(0.9830);transform-origin:left;left:681.41px;z-index:6">Duyệt</div>
<div class=t id=tx65 style="top:724.05px;font-size:14px;line-height:14px;font-weight:bold;color:#d2d2d2;transform:scaleX(0.9395);transform-origin:left;left:788.91px;z-index:6">Xóa</div>
<div class=t id=tx66 style="top:724.05px;font-size:14px;line-height:14px;font-weight:bold;color:#ffffff;transform:scaleX(0.9750);transform-origin:left;left:1047.81px;z-index:6">Hoãn</div>
<div class=t id=tx67 style="top:724.05px;font-size:14px;line-height:14px;font-weight:bold;color:#ffffff;transform:scaleX(0.8925);transform-origin:left;left:1144.72px;z-index:6">Cất</div>

<!-- ======= footer ======= -->
<div class=a style="z-index:5;left:0;top:709px;width:1216px;height:45px;background:#3a3b3f;border-top:1px solid #2a2b2d;border-bottom:1px solid #4c4d50"></div>
<div class=a style="z-index:5;left:0;top:710px;width:1px;height:44px;background:#4a4a4b"></div>
<div class=a style="z-index:5;left:1215px;top:710px;width:1px;height:44px;background:#4a4a4b"></div>
<div class=a style="z-index:5;left:21px;top:717px;width:80px;height:28px;border:1.5px solid #fff;border-radius:4px"></div>
<div class=a style="z-index:5;left:1025px;top:717px;width:80px;height:28px;border:1.5px solid #fff;border-radius:4px"></div>
<div class=a style="z-index:5;left:1115px;top:717px;width:80px;height:28px;background:#13a51c;border-radius:4px"></div>
<div class=a style="z-index:5;left:404px;top:723px;width:2px;height:16px;background:#7b7b7b"></div>
<div class=a style="z-index:5;left:533px;top:723px;width:2px;height:16px;background:#7b7b7b"></div>
<div class=a style="z-index:5;left:637px;top:723px;width:2px;height:16px;background:#7b7b7b"></div>
<div class=a style="z-index:5;left:742px;top:723px;width:2px;height:16px;background:#7b7b7b"></div>
<!-- refresh -->
<svg style="z-index:5;left:327px;top:721px" width="20" height="20" viewBox="0 0 20 20" fill="none" stroke="#acaeb3" stroke-width="1.5" stroke-linecap="round" stroke-linejoin="round"><path d="M17.6 4.6A9.4 9.4 0 1 0 19.3 10.3"/><path d="M18.6 0.6v4.6h-4.6"/></svg>
<!-- tien ich -->
<svg style="z-index:5;left:421px;top:721px" width="20" height="20" viewBox="0 0 20 20" fill="none" stroke="#fff" stroke-width="1.8"><circle cx="10" cy="10" r="9.1"/><g fill="#fff" stroke="none"><rect x="9" y="6" width="2" height="2"/><rect x="9" y="9.1" width="2" height="2"/><rect x="9" y="12.2" width="2" height="2"/></g></svg>
<svg style="z-index:5;left:509px;top:729px" width="9" height="5" viewBox="0 0 9 5"><path d="M0 0h9L4.5 5z" fill="#fff"/></svg>
<!-- printer -->
<svg style="z-index:5;left:555px;top:721px" width="21" height="21" viewBox="0 0 21 21" fill="none" stroke="#9a9a9c" stroke-width="1.7" stroke-linejoin="round"><path d="M3.6 5.5V2.2a1.5 1.5 0 0 1 1.5-1.5h10.3a1.5 1.5 0 0 1 1.5 1.5v3.3"/><path d="M3.6 14.4H2.3a1.5 1.5 0 0 1-1.5-1.5V7a1.5 1.5 0 0 1 1.5-1.5h15.5a1.5 1.5 0 0 1 1.5 1.5v5.9a1.5 1.5 0 0 1-1.5 1.5h-0.9"/><path d="M3.6 11.6h13.3v6.9a1.5 1.5 0 0 1-1.5 1.5H5.1a1.5 1.5 0 0 1-1.5-1.5z"/></svg>
<svg style="z-index:5;left:613px;top:729px" width="8" height="5" viewBox="0 0 8 5"><path d="M0 0h8L4 5z" fill="#8a8a8c"/></svg>
<!-- doc -->
<svg style="z-index:5;left:656px;top:721px" width="17" height="21" viewBox="0 0 17 21" fill="none" stroke="#c8c8c9" stroke-width="1.7" stroke-linejoin="round" stroke-linecap="round"><path d="M2.3 0.8h7.3L16 6.4v11.9a1.5 1.5 0 0 1-1.5 1.5H2.3a1.5 1.5 0 0 1-1.5-1.5V2.3a1.5 1.5 0 0 1 1.5-1.5z"/><path d="M9.6 0.9v4.8h6.3"/><path d="M3.8 7.1h2.6M3.8 10.9h8.6M3.8 14.5h8.6"/></svg>
<!-- trash footer -->
<svg style="z-index:5;left:761px;top:721px" width="21" height="21" viewBox="0 0 21 21" fill="none" stroke="#c8c8c9" stroke-width="1.7" stroke-linejoin="round" stroke-linecap="round"><path d="M0.4 4.7h19.5"/><path d="M5.7 4.4V2.3a1.5 1.5 0 0 1 1.5-1.5h5.9a1.5 1.5 0 0 1 1.5 1.5v2.1"/><path d="M3.1 7l1.4 11.2a1.4 1.4 0 0 0 1.4 1.2h8.5a1.4 1.4 0 0 0 1.4-1.2L17.2 7"/><path d="M8.1 9.2v6.6M12.1 9.2v6.6"/></svg>

<!-- watermark -->
<div class=t style="z-index:7;left:1076.3px;top:697.6px;font-size:19.3px;line-height:22px;color:rgba(152,152,155,.85)">Activate Windows</div>
<div class=t style="z-index:7;left:1076px;top:722px;font-size:15px;line-height:18px;color:rgba(152,152,155,.85)">Go to Settings to activate Windows.</div>
</body></html>
